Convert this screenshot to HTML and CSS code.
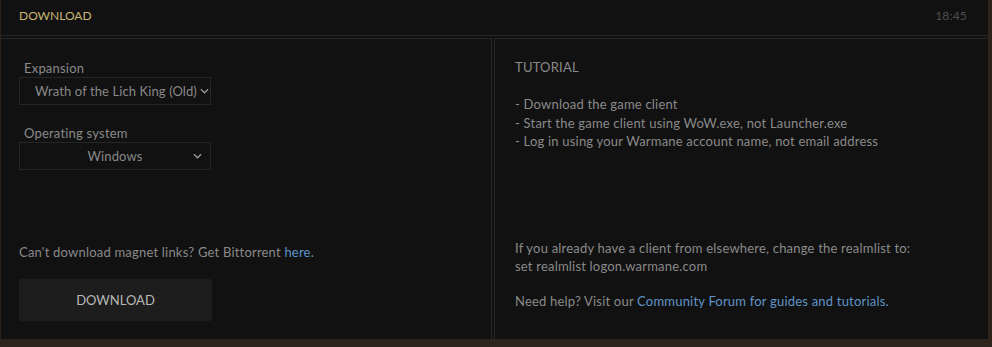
FILE: index.html
```html
<!DOCTYPE html>
<html lang="en">
<head>
    <meta charset="UTF-8">
    <meta name="viewport" content="width=device-width, initial-scale=1.0">
    <title>Download</title>
    <link rel="stylesheet" href="styles.css">
</head>
<body>
    <div class="frame">
        <div class="panel">
            <div class="panel-header">
                <span class="panel-title">Download</span>
                <span class="panel-time">18:45</span>
            </div>
            <div class="panel-body">
                <div class="col col-left">
                    <div class="field">
                        <label class="field-label">Expansion</label>
                        <div class="select">
                            <span>Wrath of the Lich King (Old)</span>
                            <svg class="chevron" viewBox="0 0 10 6" width="9" height="6"><path d="M1 1l4 4 4-4" fill="none" stroke="currentColor" stroke-width="1.4"/></svg>
                        </div>
                    </div>
                    <div class="field">
                        <label class="field-label">Operating system</label>
                        <div class="select select-os">
                            <span>Windows</span>
                            <svg class="chevron" viewBox="0 0 10 6" width="9" height="6"><path d="M1 1l4 4 4-4" fill="none" stroke="currentColor" stroke-width="1.4"/></svg>
                        </div>
                    </div>
                    <p class="note">Can't download magnet links? Get Bittorrent <a href="#">here</a>.</p>
                    <button class="btn-download">Download</button>
                </div>
                <div class="col col-right">
                    <p class="tut-title">TUTORIAL</p>
                    <ul class="steps">
                        <li>- Download the game client</li>
                        <li>- Start the game client using WoW.exe, not Launcher.exe</li>
                        <li>- Log in using your Warmane account name, not email address</li>
                    </ul>
                    <p class="realm">If you already have a client from elsewhere, change the realmlist to:<br>set realmlist logon.warmane.com</p>
                    <p class="help">Need help? Visit our <a href="#">Community Forum for guides and tutorials.</a></p>
                </div>
            </div>
        </div>
    </div>
</body>
</html>
```

FILE: styles.css
```css
:root {
    --bg: #111111;
    --line: #262626;
    --text: #8a8a8a;
    --gold: #c9b574;
    --link: #5f95c9;
    --brown: #2f241b;
}
* {
    margin: 0;
    padding: 0;
    box-sizing: border-box;
}
body {
    background: var(--brown);
    font-family: Lato, "Liberation Sans", sans-serif;
    font-size: 13px;
    letter-spacing: 0.2px;
    color: var(--text);
}
.frame {
    width: 992px;
    height: 347px;
    background: var(--brown);
    padding: 0 4px 8px 1px;
}
.panel {
    height: 100%;
    background: var(--bg);
    display: flex;
    flex-direction: column;
}
.panel-header {
    height: 36px;
    display: flex;
    align-items: center;
    justify-content: space-between;
    padding: 0 21px 5px 18px;
    border-bottom: 1px solid var(--line);
}
.panel-title {
    color: var(--gold);
    font-size: 12px;
    letter-spacing: 0;
    text-transform: uppercase;
}
.panel-time {
    color: #4e4e4e;
    font-size: 12px;
}
.panel-body {
    flex: 1;
    display: flex;
    gap: 2px;
    padding-top: 2px;
}
.col {
    border-top: 1px solid var(--line);
}
.col-left {
    width: 491px;
    border-right: 1px solid var(--line);
    padding: 21px 0 0 18px;
    display: flex;
    flex-direction: column;
}
.col-right {
    flex: 1;
    border-left: 1px solid var(--line);
    padding: 20px 0 0 20px;
}
.field {
    margin-bottom: 20px;
}
.field-label {
    display: block;
    padding-left: 5px;
    height: 17px;
    line-height: 17px;
}
.select {
    width: 192px;
    height: 28px;
    border: 1px solid #262626;
    display: flex;
    align-items: center;
    justify-content: center;
    gap: 3px;
    padding-left: 14px;
    color: #888888;
    white-space: nowrap;
    letter-spacing: 0.1px;
}
.select-os {
    padding-left: 0;
    gap: 0;
    position: relative;
}
.select-os .chevron {
    position: absolute;
    right: 8px;
}
.chevron {
    color: #9a9a9a;
    flex: none;
}
.note {
    margin-top: 54px;
}
a {
    color: var(--link);
    text-decoration: none;
}
.btn-download {
    margin-top: 19px;
    width: 193px;
    height: 42px;
    background: #1d1d1d;
    border: none;
    border-radius: 3px;
    color: #b8b8b8;
    font-family: inherit;
    font-size: 13px;
    text-transform: uppercase;
    cursor: pointer;
}
.tut-title {
    line-height: 17px;
}
.steps {
    list-style: none;
    margin-top: 19px;
    line-height: 18.5px;
}
.realm {
    margin-top: 88px;
    line-height: 18px;
}
.help {
    margin-top: 18px;
}
```
